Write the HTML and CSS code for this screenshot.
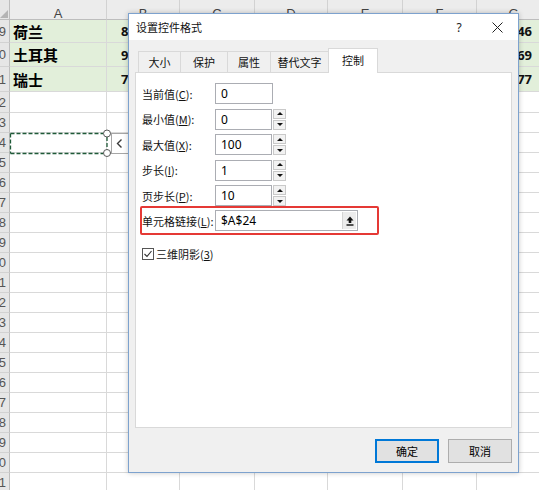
FILE: index.html
```html
<!DOCTYPE html>
<html lang="zh-CN">
<head>
<meta charset="utf-8">
<title>设置控件格式</title>
<link rel="stylesheet" href="styles.css">
</head>
<body>
<div class="sheet">
  <div class="corner"><svg width="10" height="20" viewBox="0 0 10 20"><polygon points="8,10 8,18 0,18" fill="#b4b4b4"/></svg></div>
  <div class="ch">A</div><div class="ch">B</div><div class="ch">C</div><div class="ch">D</div><div class="ch">E</div><div class="ch">F</div><div class="ch">G</div>

  <div class="rh"><span>19</span></div><div class="c g name">荷兰</div><div class="c g nl">85</div><div class="c g"></div><div class="c g"></div><div class="c g"></div><div class="c g"></div><div class="c g nr">46</div>
  <div class="rh"><span>20</span></div><div class="c g name">土耳其</div><div class="c g nl">92</div><div class="c g"></div><div class="c g"></div><div class="c g"></div><div class="c g"></div><div class="c g nr">69</div>
  <div class="rh"><span>21</span></div><div class="c g name">瑞士</div><div class="c g nl">78</div><div class="c g"></div><div class="c g"></div><div class="c g"></div><div class="c g"></div><div class="c g nr">77</div>

  <div class="rh"><span>22</span></div><div class="c"></div><div class="c"></div><div class="c"></div><div class="c"></div><div class="c"></div><div class="c"></div><div class="c"></div>
  <div class="rh"><span>23</span></div><div class="c"></div><div class="c"></div><div class="c"></div><div class="c"></div><div class="c"></div><div class="c"></div><div class="c"></div>
  <div class="rh"><span>24</span></div><div class="c"></div><div class="c"></div><div class="c"></div><div class="c"></div><div class="c"></div><div class="c"></div><div class="c"></div>
  <div class="rh"><span>25</span></div><div class="c"></div><div class="c"></div><div class="c"></div><div class="c"></div><div class="c"></div><div class="c"></div><div class="c"></div>
  <div class="rh"><span>26</span></div><div class="c"></div><div class="c"></div><div class="c"></div><div class="c"></div><div class="c"></div><div class="c"></div><div class="c"></div>
  <div class="rh"><span>27</span></div><div class="c"></div><div class="c"></div><div class="c"></div><div class="c"></div><div class="c"></div><div class="c"></div><div class="c"></div>
  <div class="rh"><span>28</span></div><div class="c"></div><div class="c"></div><div class="c"></div><div class="c"></div><div class="c"></div><div class="c"></div><div class="c"></div>
  <div class="rh"><span>29</span></div><div class="c"></div><div class="c"></div><div class="c"></div><div class="c"></div><div class="c"></div><div class="c"></div><div class="c"></div>
  <div class="rh"><span>30</span></div><div class="c"></div><div class="c"></div><div class="c"></div><div class="c"></div><div class="c"></div><div class="c"></div><div class="c"></div>
  <div class="rh"><span>31</span></div><div class="c"></div><div class="c"></div><div class="c"></div><div class="c"></div><div class="c"></div><div class="c"></div><div class="c"></div>
  <div class="rh"><span>32</span></div><div class="c"></div><div class="c"></div><div class="c"></div><div class="c"></div><div class="c"></div><div class="c"></div><div class="c"></div>
  <div class="rh"><span>33</span></div><div class="c"></div><div class="c"></div><div class="c"></div><div class="c"></div><div class="c"></div><div class="c"></div><div class="c"></div>
  <div class="rh"><span>34</span></div><div class="c"></div><div class="c"></div><div class="c"></div><div class="c"></div><div class="c"></div><div class="c"></div><div class="c"></div>
  <div class="rh"><span>35</span></div><div class="c"></div><div class="c"></div><div class="c"></div><div class="c"></div><div class="c"></div><div class="c"></div><div class="c"></div>
  <div class="rh"><span>36</span></div><div class="c"></div><div class="c"></div><div class="c"></div><div class="c"></div><div class="c"></div><div class="c"></div><div class="c"></div>
  <div class="rh"><span>37</span></div><div class="c"></div><div class="c"></div><div class="c"></div><div class="c"></div><div class="c"></div><div class="c"></div><div class="c"></div>
  <div class="rh"><span>38</span></div><div class="c"></div><div class="c"></div><div class="c"></div><div class="c"></div><div class="c"></div><div class="c"></div><div class="c"></div>
  <div class="rh"><span>39</span></div><div class="c"></div><div class="c"></div><div class="c"></div><div class="c"></div><div class="c"></div><div class="c"></div><div class="c"></div>
  <div class="rh"><span>40</span></div><div class="c"></div><div class="c"></div><div class="c"></div><div class="c"></div><div class="c"></div><div class="c"></div><div class="c"></div>
  <div class="rh"><span>41</span></div><div class="c"></div><div class="c"></div><div class="c"></div><div class="c"></div><div class="c"></div><div class="c"></div><div class="c"></div>
</div>

<svg class="sel" width="140" height="45" viewBox="0 120 140 45">
  <rect x="112" y="133" width="28" height="20" fill="#fff"/>
  <path d="M111.5 133 V153.5 M107 133.5 H140 M107 153.5 H140" stroke="#a6a6a6" stroke-width="1" fill="none"/>
  <polyline points="121.5,139.5 117.5,143.5 121.5,147.5" fill="none" stroke="#3a3a3a" stroke-width="1.4"/>
  <path d="M10.5 133.5 H103.5 M10.5 153.5 H103.5 M10.5 133.5 V153.5 M107 137 V150" stroke="#1f5a38" stroke-width="1.3" stroke-dasharray="4 2" fill="none"/>
  <circle cx="107" cy="133.5" r="3.5" fill="#fff" stroke="#5a5a5a" stroke-width="1"/>
  <circle cx="107" cy="153" r="3.5" fill="#fff" stroke="#5a5a5a" stroke-width="1"/>
</svg>

<div class="dlg">
  <div class="titlebar">
    <span class="ttl">设置控件格式</span>
    <span class="help">?</span>
    <span class="close"><svg width="11" height="11" viewBox="0 0 11 11"><path d="M0.5 0.5L10.5 10.5M10.5 0.5L0.5 10.5" stroke="#222" stroke-width="1" fill="none"/></svg></span>
  </div>
  <div class="dbody">
    <div class="tabs">
      <div class="tab t1">大小</div>
      <div class="tab t2">保护</div>
      <div class="tab t3">属性</div>
      <div class="tab t4">替代文字</div>
      <div class="tab t5 active">控制</div>
    </div>
    <div class="panel">
      <div class="fields">
        <div class="frow"><span class="lbl">当前值(<u>C</u>):</span><div class="tb w58"><span class="val">0</span></div></div>
        <div class="frow"><span class="lbl">最小值(<u>M</u>):</span><div class="spin"><div class="tb w57"><span class="val">0</span></div><div class="sbtns"><span class="sb up"></span><span class="sb dn"></span></div></div></div>
        <div class="frow"><span class="lbl">最大值(<u>X</u>):</span><div class="spin"><div class="tb w57"><span class="val">100</span></div><div class="sbtns"><span class="sb up"></span><span class="sb dn"></span></div></div></div>
        <div class="frow"><span class="lbl">步长(<u>I</u>):</span><div class="spin"><div class="tb w57"><span class="val">1</span></div><div class="sbtns"><span class="sb up"></span><span class="sb dn"></span></div></div></div>
        <div class="frow"><span class="lbl">页步长(<u>P</u>):</span><div class="spin"><div class="tb w57"><span class="val">10</span></div><div class="sbtns"><span class="sb up"></span><span class="sb dn"></span></div></div></div>
      </div>
      <div class="linkbox">
        <span class="lbl">单元格链接(<u>L</u>):</span>
        <div class="tb ref"><span class="val">$A$24</span><span class="refbtn"><svg width="8" height="10" viewBox="0 0 8 10"><path d="M4 0.5 L7.5 4.5 H5.3 V7 H2.7 V4.5 H0.5 Z" fill="#111"/><rect x="0.5" y="8.3" width="7" height="1.4" fill="#111"/></svg></span></div>
      </div>
      <div class="chkrow">
        <span class="chk"><svg width="10" height="10" viewBox="0 0 10 10"><path d="M1.5 5 L4 7.5 L8.5 2" fill="none" stroke="#333" stroke-width="1.1"/></svg></span>
        <span class="chklbl">三维阴影(<u>3</u>)</span>
      </div>
    </div>
  </div>
  <div class="foot">
    <button class="btn def">确定</button>
    <button class="btn">取消</button>
  </div>
</div>
</body>
</html>
```

FILE: styles.css
```css
* { box-sizing: border-box; }
html, body { margin: 0; padding: 0; }
body {
  width: 539px;
  height: 490px;
  overflow: hidden;
  position: relative;
  background: #fff;
  color: #000;
  font-family: "Noto Sans", "Noto Sans CJK SC", sans-serif;
}

/* spreadsheet */
.sheet {
  display: grid;
  grid-template-columns: 10px 97px 73px 75px 73px 75px 74px 74px;
  grid-template-rows: 20px 23px 24px 25px 21px 20px 20px repeat(17, 20px);
  width: 551px;
}
.corner {
  background: #e6e6e6;
  border-right: 1px solid #bdbdbd;
  border-bottom: 1px solid #bdbdbd;
}
.corner svg { display: block; }
.ch {
  background: #ececec;
  border-right: 1px solid #d2d2d2;
  border-bottom: 1px solid #bdbdbd;
  font: 13px/20px "Liberation Sans", sans-serif;
  color: #444;
  text-align: center;
  padding-top: 4px;
  overflow: hidden;
}
.rh {
  background: #e6e6e6;
  border-right: 1px solid #bdbdbd;
  border-bottom: 1px solid #d2d2d2;
  display: flex;
  justify-content: flex-end;
  align-items: center;
  padding-right: 3px;
  overflow: hidden;
  white-space: nowrap;
  font: 13px "Liberation Sans", sans-serif;
  color: #555;
}
.c {
  border-right: 1px solid #d9d9d9;
  border-bottom: 1px solid #d9d9d9;
}
.g {
  background: #e2efda;
  display: flex;
  align-items: center;
  font-weight: 700;
  white-space: nowrap;
  overflow: hidden;
}
.name {
  font-family: "Noto Sans CJK SC", sans-serif;
  font-size: 15px;
  padding-left: 3px;
}
.nl {
  font: 700 13px "Noto Sans", sans-serif;
  padding-left: 14px;
  color: #111;
}
.nr {
  font: 700 13px "Noto Sans", sans-serif;
  justify-content: flex-end;
  padding-right: 18px;
  color: #111;
}

/* selected scroll-bar form control (overlay) */
.sel {
  position: absolute;
  left: 0;
  top: 120px;
}

/* dialog */
.dlg {
  position: absolute;
  left: 128px;
  top: 13px;
  width: 391px;
  height: 460px;
  border: 1px solid #7da2ce;
  background: #f0f0f0;
  box-shadow: 0 0 5px rgba(0, 0, 0, 0.22);
  display: flex;
  flex-direction: column;
  font-family: "Noto Sans CJK SC", sans-serif;
  font-size: 11px;
  z-index: 5;
}
.titlebar {
  height: 26px;
  flex: none;
  background: #fff;
  display: flex;
  align-items: center;
  padding-left: 7px;
}
.ttl { flex: 1; font-size: 11px; color: #111; }
.help {
  width: 14px;
  text-align: center;
  margin-right: 26px;
  font: 12px "Noto Sans", sans-serif;
  color: #222;
}
.close { width: 11px; height: 11px; margin-right: 15px; display: flex; }

.dbody { padding: 8px 6px 0; flex: none; }
.tabs {
  display: flex;
  align-items: flex-end;
  height: 25px;
  padding-left: 3px;
  position: relative;
  z-index: 1;
}
.tab {
  height: 21px;
  margin-bottom: 1px;
  margin-right: -1px;
  border: 1px solid #d9d9d9;
  border-bottom: none;
  background: #f0f0f0;
  display: flex;
  align-items: center;
  justify-content: center;
  font-size: 11px;
  color: #111;
}
.t1 { width: 43px; }
.t2 { width: 48px; }
.t3 { width: 44px; }
.t4 { width: 59px; }
.t5 { width: 50px; }
.tab.active {
  height: 25px;
  margin-bottom: 0;
  background: #fff;
  padding-bottom: 2px;
}
.panel {
  height: 356px;
  margin-top: -1px;
  background: #fff;
  border: 1px solid #d9d9d9;
  padding: 10px 0 0 6px;
}
.fields {
  display: flex;
  flex-direction: column;
  gap: 4.5px;
}
.frow {
  display: flex;
  align-items: center;
  height: 21px;
}
.lbl {
  width: 73px;
  flex: none;
  white-space: nowrap;
  font-size: 11px;
  color: #111;
}
.lbl u, .chklbl u { text-underline-offset: 1px; }
.tb {
  height: 21px;
  border: 1px solid #abadb3;
  background: #fff;
  display: flex;
  align-items: center;
}
.w58 { width: 58px; }
.w57 { width: 57px; }
.val {
  flex: 1;
  padding-left: 5px;
  font: 12px "Noto Sans", sans-serif;
  color: #000;
}
.spin { display: flex; height: 21px; }
.sbtns {
  width: 14px;
  height: 21px;
  display: flex;
  flex-direction: column;
  gap: 1px;
  padding: 0 0 0 1px;
}
.sb {
  flex: 1;
  border: 1px solid #c9c9c9;
  background: #f2f2f2;
  display: flex;
  align-items: center;
  justify-content: center;
}
.sb::after {
  content: "";
  width: 0;
  height: 0;
  border-left: 3px solid transparent;
  border-right: 3px solid transparent;
}
.sb.up::after { border-bottom: 3px solid #111; }
.sb.dn::after { border-top: 3px solid #111; }

.linkbox {
  display: flex;
  align-items: center;
  width: 239px;
  height: 29px;
  margin-left: -2px;
  border: 2px solid #e53935;
  border-radius: 2px;
}
.ref { width: 143px; padding-right: 1px; }
.refbtn {
  width: 14px;
  height: 17px;
  background: #ececec;
  border-left: 1px solid #d4d4d4;
  display: flex;
  align-items: center;
  justify-content: center;
}
.refbtn svg { display: block; }
.chkrow {
  display: flex;
  align-items: center;
  gap: 2px;
  margin-top: 12px;
  height: 13px;
}
.chk {
  width: 12px;
  height: 12px;
  border: 1px solid #555;
  background: #fff;
  display: flex;
  align-items: center;
  justify-content: center;
}
.chklbl { font-size: 11px; color: #111; }

.foot {
  height: 44px;
  flex: none;
  display: flex;
  justify-content: flex-end;
  align-items: flex-start;
  gap: 9px;
  padding: 11px 6px 0;
}
.btn {
  width: 64px;
  height: 24px;
  padding: 0;
  background: #e1e1e1;
  border: 1px solid #adadad;
  font-family: "Noto Sans CJK SC", sans-serif;
  font-size: 11px;
  color: #000;
}
.btn.def {
  border-color: #0078d7;
  box-shadow: inset 0 0 0 1px #0078d7;
}
```
